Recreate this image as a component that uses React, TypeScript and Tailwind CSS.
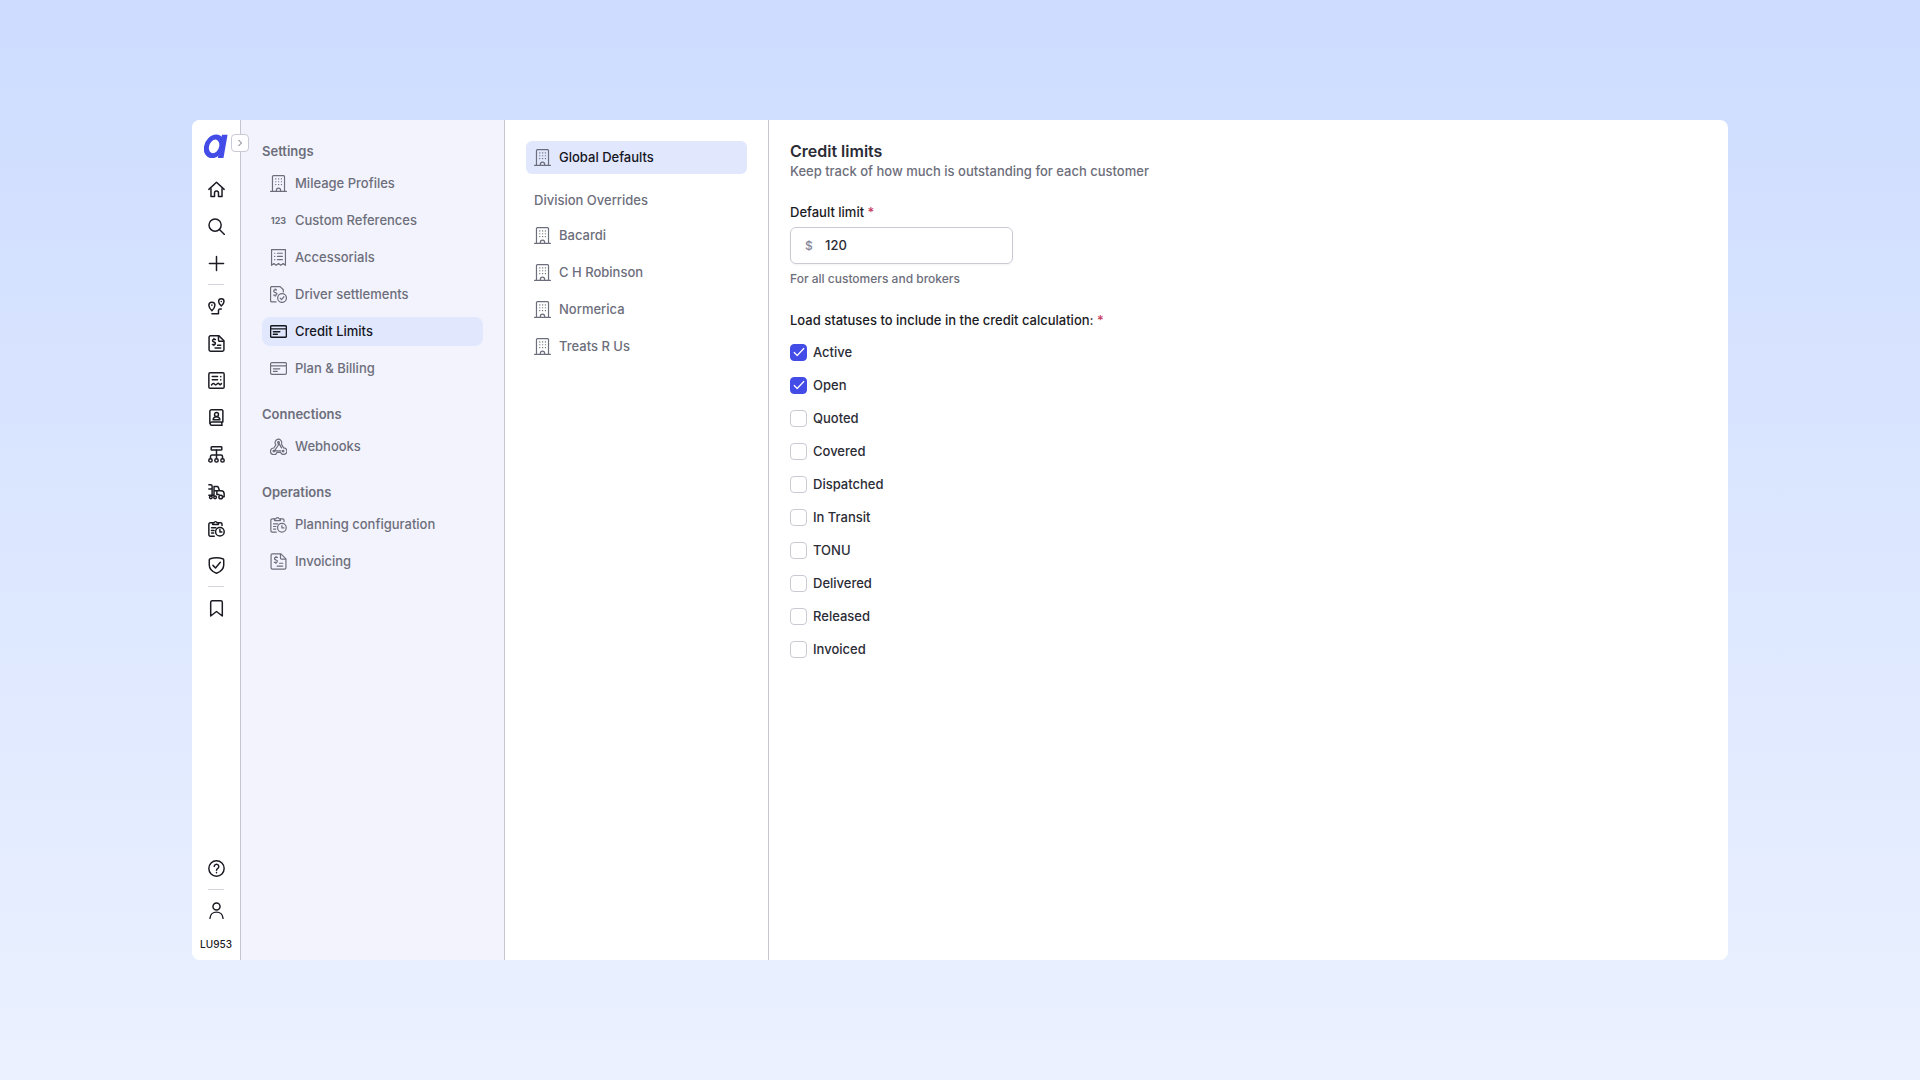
import { useState } from "react";
import type { ReactNode } from "react";

type IconName =
  | "home"
  | "search"
  | "plus"
  | "route"
  | "invoice"
  | "report"
  | "contacts"
  | "org"
  | "truck"
  | "planning"
  | "shield"
  | "bookmark"
  | "help"
  | "user"
  | "building"
  | "receipt"
  | "settlement"
  | "card"
  | "webhook";

const ICONS: Record<IconName, ReactNode> = {
  home: (
    <>
      <path d="M1.2 11.8 12 1.8l10.8 10" />
      <path d="M4.2 11v10.8h5V17a2.8 2.8 0 0 1 5.6 0v4.8h5V11" />
    </>
  ),
  search: (
    <>
      <circle cx="10" cy="10" r="8.6" />
      <path d="m16.2 16.2 7 7" />
    </>
  ),
  plus: <path d="M12 2v20M2 12h20" />,
  route: (
    <>
      <path d="M5.5 18S1.2 13.8 1.2 10.300a4.300 4.300 0 0 1 8.600 0c0 3.500-4.300 7.700-4.300 7.700Z" />
      <path d="M5.500 10v.4" />
      <path d="M18.800 11.300s-3.800-3.300-3.800-6.300a3.800 3.800 0 0 1 7.600 0c0 3-3.800 6.300-3.800 6.300Z" />
      <path d="M18.800 4.800v.3M5.500 22.400h9.300v-4.800a2 2 0 0 1 2-2h2" />
    </>
  ),
  invoice: (
    <>
      <path d="M15.500 1.200H3.500a2 2 0 0 0-2 2v17.600a2 2 0 0 0 2 2h17a2 2 0 0 0 2-2V8.200Z" />
      <path d="M14.800 1.800v5.400a1.500 1.500 0 0 0 1.500 1.500h5.600" />
      <path d="M10.500 6.300H8a1.600 1.600 0 0 0-.6 3.100l2 .8a1.600 1.600 0 0 1-.6 3.100H6.200M8.400 4.800v1.500M8.400 13.300v1.500M13.500 14.500h4.500M10 18.500h8" />
    </>
  ),
  report: (
    <>
      <rect x="1.200" y="1.200" width="21.600" height="21.600" rx="1.800" />
      <path d="M6 6.500h7.500M6 11h7.500M18 6.300v.4M18 10.800v.4M5 18.300c2-2.800 3.300-2.600 4.300-1.100s2 1.200 3.400-.2 2.400-1.400 3.200 0 1.700 1.300 3.100-.7" />
    </>
  ),
  contacts: (
    <>
      <path d="M21 18.500H4.800a2.200 2.200 0 0 0 0 4.300H20M2.600 20.500V3.600a2.400 2.400 0 0 1 2.400-2.400h14.500A1.500 1.500 0 0 1 21 2.700v15.800M19.500 18.500v4" />
      <circle cx="12" cy="7.800" r="2.800" />
      <path d="M7.200 15.200c.3-2.600 2.300-4.300 4.800-4.300s4.500 1.700 4.800 4.300Z" />
    </>
  ),
  org: (
    <>
      <rect x="4.500" y="1.200" width="15" height="4.600" rx="1" />
      <path d="M12 5.800v12M3.500 17.800v-3a2 2 0 0 1 2-2h13a2 2 0 0 1 2 2v3" />
      <circle cx="3.500" cy="20.300" r="2.400" />
      <circle cx="12" cy="20.300" r="2.400" />
      <circle cx="20.500" cy="20.300" r="2.400" />
    </>
  ),
  truck: (
    <>
      <path d="M1.200 2.500h2.600a2 2 0 0 1 2 2v12.700M1.200 8.500h4.600M1.200 17.200h6.500M8.500 17.200V5h4.300a2 2 0 0 1 1.900 1.300l1.500 4.700M8.500 11h9.800a4.500 4.500 0 0 1 4.500 4.500v4H21M12.500 11v5.200h3" />
      <circle cx="4" cy="20.200" r="1.900" />
      <circle cx="10" cy="20.200" r="1.900" />
      <circle cx="18" cy="19.800" r="2.600" />
    </>
  ),
  planning: (
    <>
      <path d="M8.800 22.800H3.200a2 2 0 0 1-2-2V6a2 2 0 0 1 2-2h3.300M14.500 4h3.300a2 2 0 0 1 2 2v1.800" />
      <path d="M6.500 6.500V4h1.800a2.400 2.400 0 0 1 4.600 0h1.800v2.500ZM5 11h6M5 14.800h3.500M5 18.500h3" />
      <circle cx="16.800" cy="16.600" r="6.100" />
      <path d="M16.800 13.500v3.300h2.800" />
    </>
  ),
  shield: (
    <>
      <path d="M12 1.200c3 0 6.200.4 8.800 1.200.8.300 1.400 1 1.400 1.800v7.200c0 6-4.600 9.600-10.200 11.600C6.400 21 1.800 17.400 1.800 11.400V4.200c0-.8.6-1.500 1.400-1.800 2.600-.8 5.800-1.200 8.800-1.200Z" />
      <path d="m7 11.800 3.600 3.700 6.800-8" />
    </>
  ),
  bookmark: (
    <path d="M5.800 1.200h12.400a2 2 0 0 1 2 2v19.400L12 16.200l-8.200 6.400V3.200a2 2 0 0 1 2-2Z" />
  ),
  help: (
    <>
      <circle cx="12" cy="12" r="10.800" />
      <path d="M8.800 9.300a3.200 3.200 0 1 1 4.800 2.800c-1 .6-1.600 1.200-1.600 2.400M12 17.800v.3" />
    </>
  ),
  user: (
    <>
      <circle cx="12" cy="6.300" r="5" />
      <path d="M2.800 23c.4-5.300 4.200-8.700 9.200-8.700s8.800 3.400 9.200 8.700" />
    </>
  ),
  building: (
    <>
      <path d="M.8 23.200h22.400M3.500 23V2.500A1.700 1.700 0 0 1 5.200.8h13.600a1.700 1.700 0 0 1 1.700 1.700V23M9 23v-1.500a3 3 0 0 1 6 0V23" />
      <path d="M8 5.500h.3M12 5.500h.3M16 5.500h.3M8 9.500h.3M12 9.500h.3M16 9.500h.3M8 13.500h.3M12 13.500h.3M16 13.500h.3" />
    </>
  ),
  receipt: (
    <>
      <path d="M2.200 23V.8h19.600V23l-3.300-2.400-3.200 2.400-3.300-2.400L8.700 23l-3.200-2.400Z" />
      <path d="M6.500 6h.3M6.500 10.500h.3M6.500 15h.3M10.500 6h7M10.500 10.500h7M10.500 15h7" />
    </>
  ),
  settlement: (
    <>
      <path d="M8.500 22.500H2.800a2 2 0 0 1-2-2V2.800a2 2 0 0 1 2-2h11.500l4.500 4.500v3" />
      <path d="M9.200 5.500H7a1.700 1.700 0 0 0-.6 3.300l2.200.9a1.700 1.700 0 0 1-.6 3.300H5.300M7.300 4v1.500M7.300 13v1.500" />
      <circle cx="17" cy="17" r="6.200" />
      <path d="m14.300 17.200 2 2 3.400-4.200" />
    </>
  ),
  card: (
    <>
      <rect x=".8" y="3.800" width="22.400" height="16.400" rx="1.800" />
      <path d="M.8 8.300h22.400M4.800 12.500h9M4.800 16h5.500" />
    </>
  ),
  webhook: (
    <>
      <path d="M8.300 9.500a4.700 4.700 0 1 1 8.200-2.300M8.300 9.500l-2.900 4.600M16.200 8.800l3 5.200a4.600 4.600 0 1 1-4.200 6.400H9.800M5.400 14.100a4.700 4.700 0 1 0 4.400 6.300" />
      <path d="m12 6.500 4.300 7.500M12 6.500l-.3 3.700-5.200 7.600M5.800 18.300h9.400" />
      <circle cx="12" cy="6.200" r="1.200" />
      <circle cx="5.500" cy="18.500" r="1.200" />
      <circle cx="18.500" cy="18.500" r="1.200" />
    </>
  ),
};

function Icon({ name, thin = false }: { name: IconName; thin?: boolean }) {
  return (
    <svg
      viewBox="0 0 24 24"
      className="size-[17px] shrink-0"
      fill="none"
      stroke="currentColor"
      strokeWidth={thin ? 1.7 : 2.1}
      strokeLinecap="round"
      strokeLinejoin="round"
      aria-hidden="true"
    >
      {ICONS[name]}
    </svg>
  );
}

const RAIL_GROUPS: { label: string; icon: IconName }[][] = [
  [
    { label: "Home", icon: "home" },
    { label: "Search", icon: "search" },
    { label: "Create", icon: "plus" },
  ],
  [
    { label: "Loads", icon: "route" },
    { label: "Invoices", icon: "invoice" },
    { label: "Reports", icon: "report" },
    { label: "Contacts", icon: "contacts" },
    { label: "Divisions", icon: "org" },
    { label: "Fleet", icon: "truck" },
    { label: "Planning", icon: "planning" },
    { label: "Safety", icon: "shield" },
  ],
  [{ label: "Bookmarks", icon: "bookmark" }],
];

const SETTINGS: {
  title: string;
  items: { label: string; icon?: IconName; active?: boolean }[];
}[] = [
  {
    title: "Settings",
    items: [
      { label: "Mileage Profiles", icon: "building" },
      { label: "Custom References" },
      { label: "Accessorials", icon: "receipt" },
      { label: "Driver settlements", icon: "settlement" },
      { label: "Credit Limits", icon: "card", active: true },
      { label: "Plan & Billing", icon: "card" },
    ],
  },
  {
    title: "Connections",
    items: [{ label: "Webhooks", icon: "webhook" }],
  },
  {
    title: "Operations",
    items: [
      { label: "Planning configuration", icon: "planning" },
      { label: "Invoicing", icon: "invoice" },
    ],
  },
];

const DIVISIONS = ["Bacardi", "C H Robinson", "Normerica", "Treats R Us"];

const STATUSES = [
  "Active",
  "Open",
  "Quoted",
  "Covered",
  "Dispatched",
  "In Transit",
  "TONU",
  "Delivered",
  "Released",
  "Invoiced",
];

function RailButton({ label, icon }: { label: string; icon: IconName }) {
  return (
    <button
      type="button"
      aria-label={label}
      className="flex size-[29px] items-center justify-center"
    >
      <Icon name={icon} />
    </button>
  );
}

function Rail() {
  return (
    <aside className="relative flex w-[49px] shrink-0 flex-col items-center border-r border-[#c5c6d0] bg-white pt-3 pb-2 text-[#1b1b24]">
      <a href="#" aria-label="Home page" className="flex h-7 items-center">
        <svg viewBox="0 0 24 24" className="size-6" aria-hidden="true">
          <g transform="translate(3.500 0) skewX(-10)">
            <ellipse
              cx="8.800"
              cy="12.400"
              rx="7.600"
              ry="9.300"
              fill="none"
              stroke="#444ce7"
              strokeWidth="5"
            />
            <rect x="14.600" y=".8" width="5.600" height="23.200" fill="#444ce7" />
          </g>
        </svg>
      </a>
      <button
        type="button"
        aria-label="Expand navigation"
        className="absolute top-[14px] -right-[9px] z-10 flex size-[18px] items-center justify-center rounded border border-[#c9cad6] bg-white text-[#6b6c7b]"
      >
        <svg
          viewBox="0 0 8 8"
          className="size-2"
          fill="none"
          stroke="currentColor"
          aria-hidden="true"
        >
          <path d="m2.500 1 3 3-3 3" />
        </svg>
      </button>

      <nav aria-label="Main" className="mt-[15px] flex flex-col items-center">
        {RAIL_GROUPS.map((group, i) => (
          <div key={group[0].label} className="flex flex-col items-center">
            {i > 0 && <hr className="mt-1.5 mb-[7px] w-4 border-[#d3d4dc]" />}
            <div className="flex flex-col gap-2">
              {group.map((item) => (
                <RailButton key={item.label} {...item} />
              ))}
            </div>
          </div>
        ))}
      </nav>

      <div className="mt-auto flex flex-col items-center">
        <RailButton label="Help" icon="help" />
        <hr className="my-1.5 w-4 border-[#d3d4dc]" />
        <RailButton label="Account" icon="user" />
        <span className="mt-[11px] text-[10px] leading-4">LU953</span>
      </div>
    </aside>
  );
}

function SettingsNav() {
  return (
    <nav
      aria-label="Settings"
      className="flex w-[264px] shrink-0 flex-col gap-[21px] border-r border-[#c5c6d0] bg-[#f2f3fc] px-[21px] py-[21px]"
    >
      {SETTINGS.map((section) => (
        <section key={section.title}>
          <h2 className="leading-5 font-semibold">{section.title}</h2>
          <ul className="mt-2 flex flex-col gap-2">
            {section.items.map((item) => (
              <li key={item.label}>
                <a
                  href="#"
                  className={
                    item.active
                      ? "flex h-[29px] items-center gap-2 rounded-lg bg-[#e1e8fd] px-2 text-[#15161e]"
                      : "flex h-[29px] items-center gap-2 rounded-lg px-2"
                  }
                >
                  {item.icon ? (
                    <Icon name={item.icon} thin={!item.active} />
                  ) : (
                    <span className="w-[17px] text-center text-[9px] font-bold">
                      123
                    </span>
                  )}
                  {item.label}
                </a>
              </li>
            ))}
          </ul>
        </section>
      ))}
    </nav>
  );
}

function DivisionNav() {
  return (
    <nav
      aria-label="Divisions"
      className="w-[264px] shrink-0 border-r border-[#c5c6d0] px-[21px] py-[21px]"
    >
      <a
        href="#"
        className="flex h-[33px] items-center gap-2 rounded-md bg-[#e1e7fd] px-2"
      >
        <Icon name="building" thin />
        <span className="text-[#15161e]">Global Defaults</span>
      </a>
      <h2 className="mt-4 px-2 leading-5">Division Overrides</h2>
      <ul className="mt-[11px] flex flex-col gap-2">
        {DIVISIONS.map((name) => (
          <li key={name}>
            <a href="#" className="flex h-[29px] items-center gap-2 px-2">
              <Icon name="building" thin />
              {name}
            </a>
          </li>
        ))}
      </ul>
    </nav>
  );
}

function CreditLimits() {
  const [limit, setLimit] = useState("120");
  const [selected, setSelected] = useState(["Active", "Open"]);

  const toggle = (status: string) =>
    setSelected((prev) =>
      prev.includes(status)
        ? prev.filter((s) => s !== status)
        : [...prev, status],
    );

  return (
    <main className="min-w-0 flex-1 px-[21px] py-[21px] text-[#2b2c36]">
      <h1 className="text-base leading-5 font-semibold">Credit limits</h1>
      <p className="leading-5 text-[#6d6e7b]">
        Keep track of how much is outstanding for each customer
      </p>

      <form className="mt-[21px]">
        <label htmlFor="limit" className="block leading-5 text-[#1b1b24]">
          Default limit <span className="text-[#c73a5c]">*</span>
        </label>
        <div className="mt-[5px] flex h-[37px] w-[223px] items-center rounded-md border border-[#c9cad4] px-[14px] shadow-xs">
          <span className="w-5 text-xs text-[#85869a]">$</span>
          <input
            id="limit"
            value={limit}
            onChange={(e) => setLimit(e.target.value)}
            className="min-w-0 flex-1 outline-none"
          />
        </div>
        <p className="mt-[5px] text-xs leading-5 text-[#6d6e7b]">
          For all customers and brokers
        </p>

        <fieldset className="mt-[21px]">
          <legend className="leading-5 text-[#1b1b24]">
            Load statuses to include in the credit calculation:{" "}
            <span className="text-[#c73a5c]">*</span>
          </legend>
          <div className="mt-3 flex flex-col items-start gap-[13px]">
            {STATUSES.map((status) => (
              <label key={status} className="flex items-center gap-1.5 leading-5">
                <span className="grid place-items-center">
                  <input
                    type="checkbox"
                    checked={selected.includes(status)}
                    onChange={() => toggle(status)}
                    className="peer col-start-1 row-start-1 size-[17px] appearance-none rounded border border-[#c9cad4] bg-white checked:border-[#444ce7] checked:bg-[#444ce7]"
                  />
                  <svg
                    viewBox="0 0 12 12"
                    className="pointer-events-none invisible col-start-1 row-start-1 size-3 text-white peer-checked:visible"
                    fill="none"
                    stroke="currentColor"
                    strokeWidth="1.2"
                    strokeLinecap="round"
                    strokeLinejoin="round"
                    aria-hidden="true"
                  >
                    <path d="m1.200 6.500 3 3 6.600-7" />
                  </svg>
                </span>
                {status}
              </label>
            ))}
          </div>
        </fieldset>
      </form>
    </main>
  );
}

export default function App() {
  return (
    <div className="flex min-h-screen flex-col bg-linear-to-b from-[#cddcff] to-[#ebf1ff] px-[10%] py-[120px] font-['Inter',sans-serif] text-[13px] font-medium text-[#6d6e7b]">
      <div className="flex flex-1 overflow-hidden rounded-lg bg-white">
        <Rail />
        <SettingsNav />
        <DivisionNav />
        <CreditLimits />
      </div>
    </div>
  );
}
